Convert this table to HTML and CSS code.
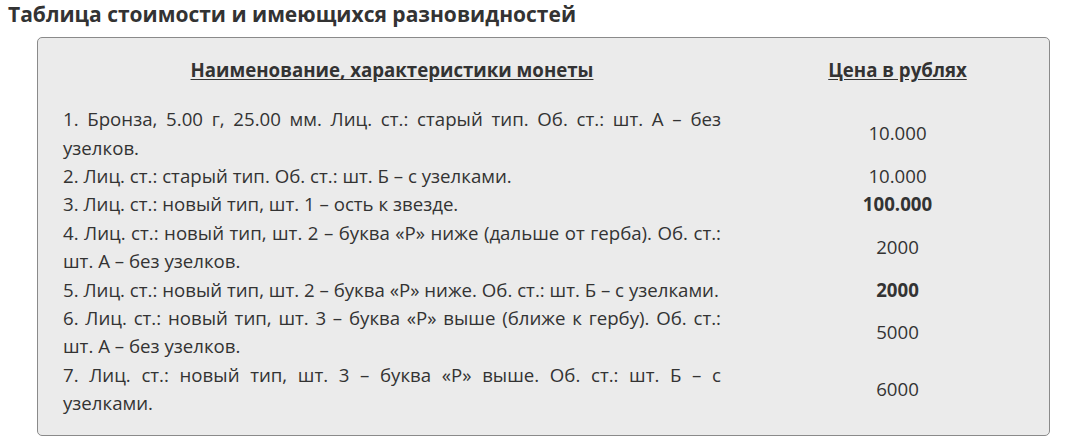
FILE: index.html
```html
<!DOCTYPE html>
<html lang="ru">
<head>
<meta charset="utf-8">
<link rel="stylesheet" href="styles.css">
</head>
<body>
<h2 class="title">Таблица стоимости и имеющихся разновидностей</h2>
<div class="price-box">
  <div class="price-table">
    <div class="th">Наименование, характеристики монеты</div>
    <div class="th th-price">Цена в рублях</div>

    <div class="desc">1. Бронза, 5.00 г, 25.00 мм. Лиц. ст.: старый тип. Об. ст.: шт. А – без узелков.</div>
    <div class="price">10.000</div>

    <div class="desc">2. Лиц. ст.: старый тип. Об. ст.: шт. Б – с узелками.</div>
    <div class="price">10.000</div>

    <div class="desc">3. Лиц. ст.: новый тип, шт. 1 – ость к звезде.</div>
    <div class="price bold">100.000</div>

    <div class="desc">4. Лиц. ст.: новый тип, шт. 2 – буква «Р» ниже (дальше от герба). Об. ст.: шт. А – без узелков.</div>
    <div class="price">2000</div>

    <div class="desc">5. Лиц. ст.: новый тип, шт. 2 – буква «Р» ниже. Об. ст.: шт. Б – с узелками.</div>
    <div class="price bold">2000</div>

    <div class="desc">6. Лиц. ст.: новый тип, шт. 3 – буква «Р» выше (ближе к гербу). Об. ст.: шт. А – без узелков.</div>
    <div class="price">5000</div>

    <div class="desc">7. Лиц. ст.: новый тип, шт. 3 – буква «Р» выше. Об. ст.: шт. Б – с узелками.</div>
    <div class="price">6000</div>
  </div>
</div>
</body>
</html>
```
FILE: styles.css
```css
html, body {
  margin: 0;
  padding: 0;
  background: #ffffff;
}
body {
  padding: 0 8px;
  font-family: "Open Sans", "DejaVu Sans", sans-serif;
  color: #333333;
}
.title {
  margin: 0;
  font-size: 21px;
  font-weight: 700;
  line-height: normal;
  color: #333333;
}
.price-box {
  margin: 9px 7px 0 29px;
  background: #ebebeb;
  border: 1px solid #8a8a8a;
  border-radius: 5px;
  padding: 18px 25px 17px 25px;
}
.price-table {
  display: grid;
  grid-template-columns: 658px 1fr;
  column-gap: 50px;
  font-size: 18.67px;
  line-height: 28.4px;
}
.th {
  font-weight: 700;
  text-align: center;
  text-decoration: underline;
  text-underline-offset: 2px;
  margin-bottom: 20.8px;
}
.desc {
  text-align: justify;
}
.price {
  display: flex;
  align-items: center;
  justify-content: center;
}
.bold {
  font-weight: 700;
}
```
